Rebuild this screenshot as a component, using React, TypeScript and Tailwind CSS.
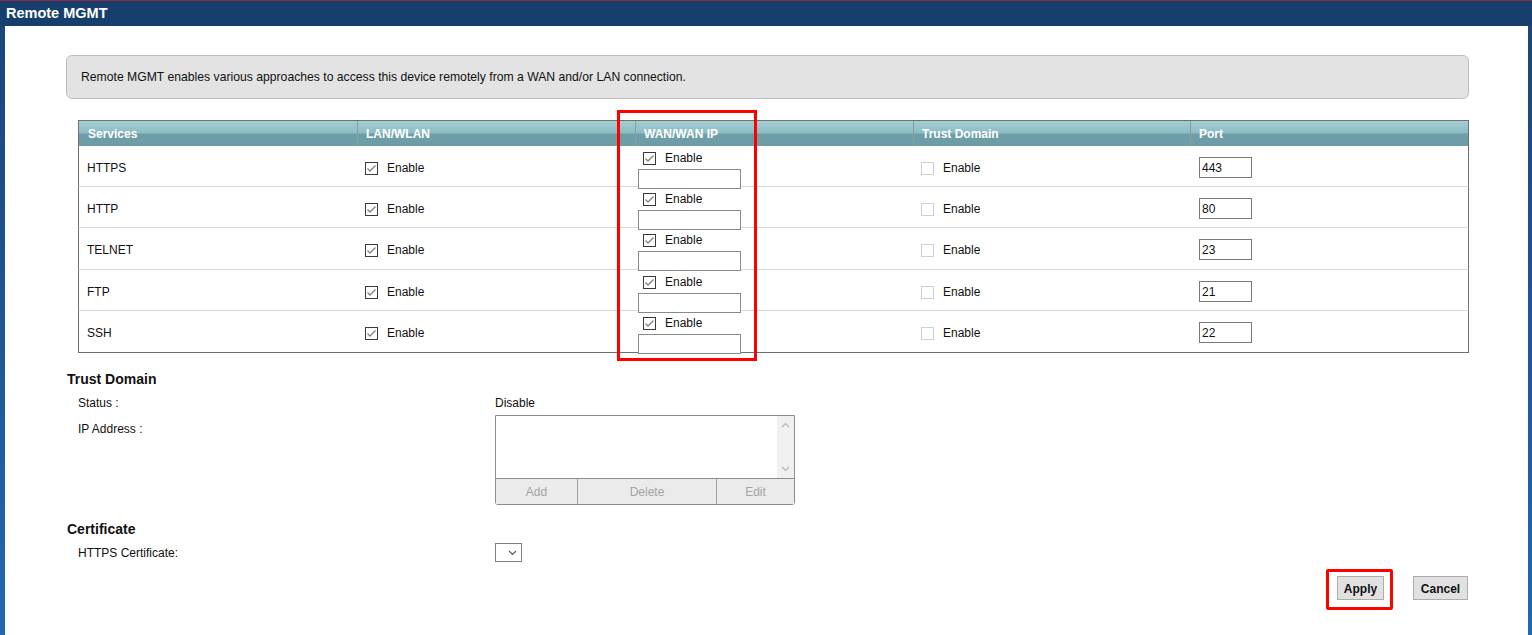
import React from "react";

const services = [
  { name: "HTTPS", port: "443", h: "h-[41px]" },
  { name: "HTTP", port: "80", h: "h-[41px]" },
  { name: "TELNET", port: "23", h: "h-[42px]" },
  { name: "FTP", port: "21", h: "h-[41px]" },
  { name: "SSH", port: "22", h: "h-[42px]" },
];

const cols = "grid grid-cols-[278px_278px_278px_277px_1fr]";

function Check({ checked = true }: { checked?: boolean }) {
  if (!checked) {
    return <span className="inline-block h-[13px] w-[13px] shrink-0 border border-[#cfcfcf] bg-white" />;
  }
  return (
    <span className="inline-flex h-[13px] w-[13px] shrink-0 items-center justify-center border border-[#3a3a3a] bg-white">
      <svg width="11" height="11" viewBox="0 0 11 11">
        <path d="M1.5 5.5 L4 8 L9.5 2.5" fill="none" stroke="#808080" strokeWidth="1.3" />
      </svg>
    </span>
  );
}

function Enable({ checked = true }: { checked?: boolean }) {
  return (
    <span className="flex items-center gap-[9px]">
      <Check checked={checked} />
      <span>Enable</span>
    </span>
  );
}

export default function App() {
  return (
    <div className="relative h-[635px] w-[1532px] overflow-hidden bg-white font-['Liberation_Sans',Arial,sans-serif] text-[12px] text-[#111]">
      <div className="flex h-[26px] items-center border-t border-[#8e2a3c] bg-[#173f6e] pl-[6px] text-[14.5px] font-bold text-white">
        Remote MGMT
      </div>

      <div className="flex h-[609px]">
        <div className="w-[5px] bg-gradient-to-b from-[#1a4679] to-[#2367b1]" />

        <div className="flex-1 bg-white pl-[61px] pr-[59px] pt-[29px]">
          <div className="flex h-[44px] items-center rounded-[6px] border border-[#bdbdbd] bg-[#e3e3e3] pl-[14px] pt-[1px] text-[12.2px]">
            Remote MGMT enables various approaches to access this device remotely from a WAN and/or LAN connection.
          </div>

          <div className="ml-[12px] mt-[21px]">
            <div
              className={`${cols} h-[26px] border border-b-0 border-[#6f6f6f] bg-[linear-gradient(to_bottom,#a3ced4_0%,#8dbcc3_48%,#6d9ea7_52%,#6d9ea7_100%)] font-bold text-white`}
            >
              {["Services", "LAN/WLAN", "WAN/WAN IP", "Trust Domain", "Port"].map((h, i) => (
                <div
                  key={h}
                  className={`flex items-center ${i > 0 ? "border-l border-[#8a9ea2] pl-[8px]" : "pl-[9px]"}`}
                >
                  {h}
                </div>
              ))}
            </div>
            {services.map((s, i) => (
              <div
                key={s.name}
                className={`${cols} ${s.h} border-x border-b border-x-[#6f6f6f] ${
                  i === services.length - 1 ? "border-b-[#6f6f6f]" : "border-b-[#d6d6d6]"
                }`}
              >
                <div className="flex items-center pl-[8px]">{s.name}</div>
                <div className="flex items-center pl-[8px] pt-[1px]">
                  <Enable />
                </div>
                <div className="flex flex-col pl-[3px] pt-[3px]">
                  <div className="pl-[5px]">
                    <Enable />
                  </div>
                  <div className="mt-[2px] h-[20px] w-[103px] border border-[#8a8a8a] bg-white" />
                </div>
                <div className="flex items-center pl-[8px] pt-[1px]">
                  <Enable checked={false} />
                </div>
                <div className="flex items-center pl-[9px]">
                  <div className="flex h-[21px] w-[53px] items-center border border-[#7a7a7a] pl-[2px]">
                    {s.port}
                  </div>
                </div>
              </div>
            ))}
          </div>

          <div className="mt-[18px] flex h-[16px] items-center pl-[1px] text-[14px] font-bold">Trust Domain</div>
          <div className="mt-[7px] grid h-[16px] grid-cols-[417px_1fr] items-center pl-[12px]">
            <div>Status :</div>
            <div>Disable</div>
          </div>
          <div className="mt-[5px] grid grid-cols-[417px_1fr] pl-[12px]">
            <div className="mt-[6px] flex h-[16px] items-center">IP Address :</div>
            <div className="w-[300px] rounded-b-[3px] border border-[#8c8c96]">
              <div className="flex h-[62px] justify-end">
                <div className="flex w-[17px] flex-col items-center justify-between bg-[#f0f0f0] py-[6px]">
                  <svg width="9" height="6" viewBox="0 0 9 6">
                    <path d="M1 5 L4.5 1.5 L8 5" fill="none" stroke="#b5b5b5" strokeWidth="1.2" />
                  </svg>
                  <svg width="9" height="6" viewBox="0 0 9 6">
                    <path d="M1 1 L4.5 4.5 L8 1" fill="none" stroke="#b5b5b5" strokeWidth="1.2" />
                  </svg>
                </div>
              </div>
              <div className="grid h-[26px] grid-cols-[81px_139px_1fr] border-t border-[#8c8c96] bg-[#ebebeb] text-[#a3a3a3]">
                <div className="flex items-center justify-center">Add</div>
                <div className="flex items-center justify-center border-l border-[#a0a0a8]">Delete</div>
                <div className="flex items-center justify-center border-l border-[#a0a0a8]">Edit</div>
              </div>
            </div>
          </div>

          <div className="mt-[16px] flex h-[16px] items-center pl-[1px] text-[14px] font-bold">Certificate</div>
          <div className="mt-[6px] grid h-[19px] grid-cols-[417px_1fr] items-center pl-[12px]">
            <div>HTTPS Certificate:</div>
            <div className="flex h-[19px] w-[27px] items-center justify-end border border-[#808080] pr-[4px]">
              <svg width="9" height="6" viewBox="0 0 9 6">
                <path d="M1 1 L4.5 4.5 L8 1" fill="none" stroke="#555" strokeWidth="1.1" />
              </svg>
            </div>
          </div>

          <div className="mt-[14px] flex justify-end gap-[29px] pr-[1px]">
            <button className="h-[24px] w-[47px] border border-[#adadad] bg-[#e1e1e1] pt-[1px] font-bold text-[#111]">
              Apply
            </button>
            <button className="h-[24px] w-[55px] border border-[#adadad] bg-[#e1e1e1] pt-[1px] font-bold text-[#111]">
              Cancel
            </button>
          </div>
        </div>

        <div className="w-[4px] bg-gradient-to-b from-[#1a4679] to-[#2367b1]" />
      </div>

      <div className="absolute left-[617px] top-[110px] h-[251px] w-[140px] border-[3px] border-[#ff0000]" />
      <div className="absolute left-[1326px] top-[569px] h-[41px] w-[67px] rounded-[2px] border-[3px] border-[#ff0000]" />
    </div>
  );
}
